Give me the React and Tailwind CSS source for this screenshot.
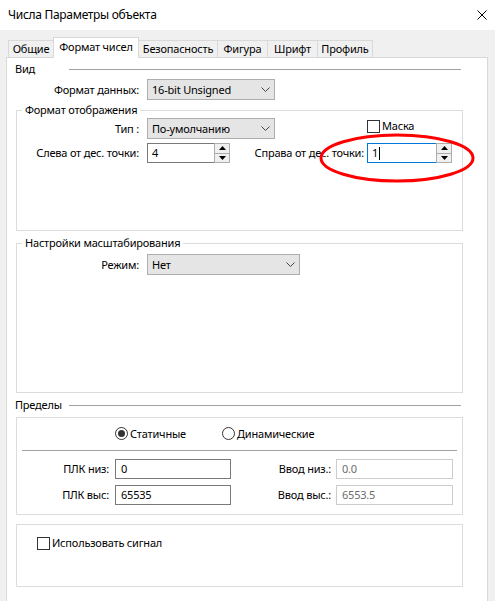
import React from "react";

// Combo box with a thin chevron on the right
const Select = ({ className, value }) => (
    <div className={`flex items-center justify-between h-[21px] bg-[#e5e5e5] border border-[#adadad] pl-[4px] pr-[4px] ${className}`}>
        <span>{value}</span>
        <svg width="9" height="5" viewBox="0 0 9 5">
            <polyline points="0.5,0.5 4.5,4.5 8.5,0.5" fill="none" stroke="#444" strokeWidth="1" />
        </svg>
    </div>
);

const Arrow = ({ up }) => (
    <svg width="7" height="4" viewBox="0 0 7 4">
        <polygon points={up ? "0,4 7,4 3.5,0" : "0,0 7,0 3.5,4"} fill="#000" />
    </svg>
);

// Numeric up/down field
const SpinBox = ({ className, value, focused }) => (
    <div className={`flex h-[20px] ${className}`}>
        <div className={`flex-1 flex items-center pl-[4px] bg-white border border-r-0 ${focused ? "border-[#0078d7]" : "border-[#7a7a7a]"}`}>
            <span>{value}</span>
            {focused && <span className="ml-px w-px h-[13px] bg-black" />}
        </div>
        <div className="w-[16px] flex flex-col border border-[#adadad] bg-[#f0f0f0]">
            <div className="flex-1 flex items-center justify-center border-b border-[#adadad]">
                <Arrow up />
            </div>
            <div className="flex-1 flex items-center justify-center">
                <Arrow />
            </div>
        </div>
    </div>
);

const TextBox = ({ className, value, disabled }) => (
    <div className={`flex items-center h-[20px] pl-[5px] bg-white border ${disabled ? "border-[#cccccc] text-[#6d6d6d]" : "border-[#7a7a7a]"} ${className}`}>
        {value}
    </div>
);

const Checkbox = ({ label, className }) => (
    <div className={`flex items-center ${className}`}>
        <div className="w-[13px] h-[13px] border border-[#333] bg-white" />
        <span className="ml-[2px]">{label}</span>
    </div>
);

const Radio = ({ label, checked }) => (
    <div className="flex items-center">
        <div className="w-[13px] h-[13px] rounded-full border border-[#333] bg-white flex items-center justify-center">
            {checked && <div className="w-[7px] h-[7px] rounded-full bg-[#333]" />}
        </div>
        <span className="ml-[2px]">{label}</span>
    </div>
);

const tabs = ["Общие", "Формат чисел", "Безопасность", "Фигура", "Шрифт", "Профиль"];
const tabWidths = ["w-[45px]", "w-[86px]", "w-[79px]", "w-[50px]", "w-[50px]", "w-[55px]"];

export default function App() {
    return (
        <div className="relative w-[495px] h-[601px] overflow-hidden bg-[#f0f0f0] font-['Noto_Sans',sans-serif] text-[11px] tracking-[-0.2px] leading-[14px] text-black">

            {/* Title bar */}
            <div className="h-[30px] bg-white flex items-center justify-between pl-[8px] pr-[8px]">
                <span className="text-[12px] tracking-[-0.3px]">Числа Параметры объекта</span>
                <svg width="10" height="10" viewBox="0 0 10 10">
                    <path d="M0.5 0.5 L9.5 9.5 M9.5 0.5 L0.5 9.5" stroke="#000" strokeWidth="1" />
                </svg>
            </div>

            {/* Tabs */}
            <div className="flex items-end mt-[7px] pl-[8px] h-[20px]">
                {tabs.map((t, i) =>
                    i === 1 ? (
                        <div key={t} className={`relative z-10 -mb-px h-[21px] bg-white border border-b-0 border-[#d9d9d9] flex items-center justify-center pb-[2px] ${tabWidths[i]}`}>
                            {t}
                        </div>
                    ) : (
                        <div key={t} className={`h-[17px] border-t border-[#d9d9d9] flex items-center justify-center ${i === 0 ? "border-l" : "border-r"} ${tabWidths[i]}`}>
                            {t}
                        </div>
                    )
                )}
            </div>

            {/* Tab page */}
            <div className="ml-[6px] w-[482px] h-[560px] bg-white border border-[#d9d9d9] pl-[8px]">

                <div className="flex items-center h-[14px] mt-[4px] w-[446px]">
                    <span className="w-[54px]">Вид</span>
                    <div className="flex-1 h-px bg-[#a0a0a0]" />
                </div>

                <div className="flex items-center mt-[3px]">
                    <span className="w-[124px] text-right">Формат данных:</span>
                    <Select className="ml-[8px] w-[128px]" value="16-bit Unsigned" />
                </div>

                {/* Display format */}
                <fieldset className="ml-[1px] mt-[3px] w-[447px] border border-[#dcdcdc]">
                    <legend className="ml-[5px] px-[3px] leading-[14px]">Формат отображения</legend>
                    <div className="h-[113px] pt-[1px]">
                        <div className="flex items-start">
                            <div className="w-[122px] h-[21px] flex items-center justify-end">Тип :</div>
                            <Select className="ml-[8px] w-[128px]" value="По-умолчанию" />
                            <Checkbox className="ml-[92px] mt-[1px]" label="Маска" />
                        </div>
                        <div className="flex items-center mt-[4px]">
                            <span className="w-[122px] text-right">Слева от дес. точки:</span>
                            <SpinBox className="ml-[8px] w-[83px]" value="4" />
                            <span className="ml-[17px] w-[117px] text-right whitespace-nowrap">Справа от дес. точки:</span>
                            <SpinBox className="ml-[3px] w-[85px]" value="1" focused />
                        </div>
                    </div>
                </fieldset>

                {/* Scaling */}
                <fieldset className="ml-[1px] mt-[5px] w-[447px] border border-[#dcdcdc]">
                    <legend className="ml-[5px] px-[3px] leading-[14px]">Настройки масштабирования</legend>
                    <div className="h-[142px] pt-[4px]">
                        <div className="flex items-center">
                            <span className="w-[122px] text-right">Режим:</span>
                            <Select className="ml-[8px] w-[153px]" value="Нет" />
                        </div>
                    </div>
                </fieldset>

                <div className="flex items-center h-[14px] mt-[5px] w-[446px]">
                    <span className="w-[54px]">Пределы</span>
                    <div className="flex-1 h-px bg-[#a0a0a0]" />
                </div>

                {/* Limits */}
                <div className="ml-[1px] mt-[5px] w-[447px] h-[98px] border border-[#dcdcdc]">
                    <div className="flex items-center h-[13px] mt-[9px] ml-[98px]">
                        <div className="w-[107px]">
                            <Radio label="Статичные" checked />
                        </div>
                        <Radio label="Динамические" />
                    </div>
                    <div className="mt-[10px] mx-[5px] h-px bg-[#a0a0a0]" />
                    <div className="flex items-center mt-[8px]">
                        <span className="w-[92px] text-right">ПЛК низ:</span>
                        <TextBox className="ml-[6px] w-[116px]" value="0" />
                        <span className="w-[100px] text-right">Ввод низ.:</span>
                        <TextBox className="ml-[5px] w-[117px]" value="0.0" disabled />
                    </div>
                    <div className="flex items-center mt-[6px]">
                        <span className="w-[92px] text-right">ПЛК выс:</span>
                        <TextBox className="ml-[6px] w-[116px]" value="65535" />
                        <span className="w-[100px] text-right">Ввод выс.:</span>
                        <TextBox className="ml-[5px] w-[117px]" value="6553.5" disabled />
                    </div>
                </div>

                {/* Signal */}
                <div className="ml-[1px] mt-[9px] w-[447px] h-[63px] border border-[#dcdcdc]">
                    <Checkbox className="ml-[20px] mt-[11px]" label="Использовать сигнал" />
                </div>
            </div>

            {/* Red marker drawn over the decimal field */}
            <svg className="absolute left-0 top-0 pointer-events-none" width="495" height="601">
                <ellipse cx="397" cy="158" rx="76" ry="23" fill="none" stroke="#ff0000" strokeWidth="3" />
            </svg>
        </div>
    );
}
